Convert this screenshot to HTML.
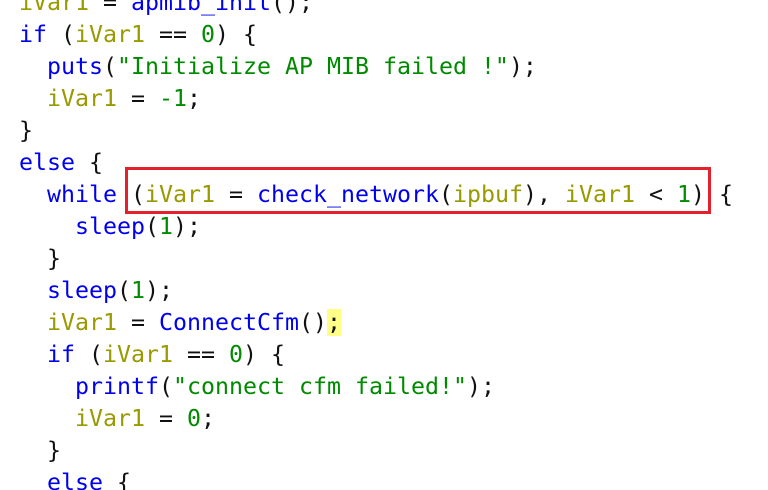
<!DOCTYPE html>
<html><head><meta charset="utf-8"><style>
html,body{margin:0;padding:0;background:#fff;width:768px;height:490px;overflow:hidden;position:relative}
pre{margin:0;position:absolute;left:19px;top:-13px;font-family:"DejaVu Sans Mono","Liberation Mono",monospace;font-size:23.25px;line-height:32px;color:#111}
.k{color:#0000ee}.v{color:#999900}.n{color:#008a00}.s{color:#008a00}
.h{background:#ffff88}
.box{position:absolute;left:125px;top:167px;width:580px;height:41px;border:3px solid #e3202b}
</style></head><body>
<pre><span class="v">iVar1</span> = <span class="k">apmib_init</span>();
<span class="k">if</span> (<span class="v">iVar1</span> == <span class="n">0</span>) {
  <span class="k">puts</span>(<span class="s">"Initialize AP MIB failed !"</span>);
  <span class="v">iVar1</span> = <span class="n">-1</span>;
}
<span class="k">else</span> {
  <span class="k">while</span> (<span class="v">iVar1</span> = <span class="k">check_network</span>(<span class="v">ipbuf</span>), <span class="v">iVar1</span> &lt; <span class="n">1</span>) {
    <span class="k">sleep</span>(<span class="n">1</span>);
  }
  <span class="k">sleep</span>(<span class="n">1</span>);
  <span class="v">iVar1</span> = <span class="k">ConnectCfm</span>()<span class="h">;</span>
  <span class="k">if</span> (<span class="v">iVar1</span> == <span class="n">0</span>) {
    <span class="k">printf</span>(<span class="s">"connect cfm failed!"</span>);
    <span class="v">iVar1</span> = <span class="n">0</span>;
  }
  <span class="k">else</span> {
</pre>
<div class="box"></div>
</body></html>
